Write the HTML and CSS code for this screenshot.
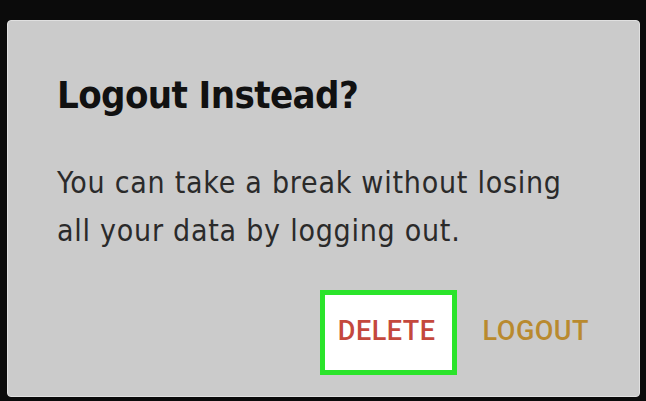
FILE: index.html
```html
<!DOCTYPE html>
<html>
<head>
    <title>Logout Instead?</title>
    <link rel="stylesheet" href="styles.css">
</head>
<body>
    <div class="dialog">
        <h1 class="dialog-title">Logout Instead?</h1>
        <p class="dialog-text">You can take a break without losing<br>all your data by logging out.</p>
        <div class="dialog-actions">
            <button class="action delete">DELETE</button>
            <button class="action logout">LOGOUT</button>
        </div>
    </div>
</body>
</html>
```

FILE: styles.css
```css
* {
    margin: 0;
    padding: 0;
    box-sizing: border-box;
}

body {
    background: #0b0b0b;
    font-family: 'DejaVu Sans Condensed', 'DejaVu Sans', sans-serif;
    font-stretch: condensed;
    padding: 20px 6px 4px 7px;
    height: 401px;
    overflow: hidden;
}

.dialog {
    width: 633px;
    height: 377px;
    background: #cbcbcb;
    border: 1px solid #e0e0e0;
    border-radius: 4px;
    padding: 51px 29px 0 49px;
}

.dialog-title {
    font-size: 38px;
    line-height: 46px;
    font-weight: 700;
    letter-spacing: -0.6px;
    color: #111;
    margin-bottom: 41px;
}

.dialog-text {
    font-size: 30px;
    line-height: 48px;
    letter-spacing: 0.75px;
    color: #2a2a2a;
    margin-top: 1px;
}

.dialog-actions {
    display: flex;
    justify-content: flex-end;
    gap: 8px;
    margin-top: 35px;
}

.action {
    font-family: Roboto, sans-serif;
    font-stretch: normal;
    font-size: 27px;
    line-height: 32px;
    font-weight: 500;
    letter-spacing: 0.5px;
    background: transparent;
    border: 5px solid transparent;
    padding: 20px 16px 23px 13px;
    cursor: pointer;
}

.action.delete {
    color: #c4483d;
    background: #fff;
    border-color: #2be42b;
}

.action.logout {
    color: #b98a2f;
}
```
